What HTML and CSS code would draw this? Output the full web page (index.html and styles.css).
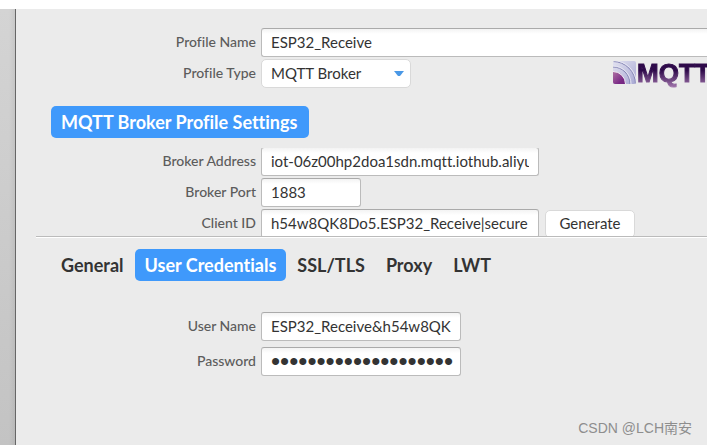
FILE: index.html
```html
<!DOCTYPE html>
<html lang="en">
<head>
	<meta charset="UTF-8">
	<title>MQTT Broker Profile</title>
	<link rel="stylesheet" href="styles.css">
</head>
<body>
	<div class="window">
		<div class="sidebar"></div>
		<main class="content">
			<div class="row">
				<label for="profile_name">Profile Name</label>
				<input class="field wide" id="profile_name" type="text" value="ESP32_Receive">
			</div>
			<div class="row">
				<label for="profile_type">Profile Type</label>
				<div class="select_box">
					<select id="profile_type">
						<option>MQTT Broker</option>
					</select>
					<svg class="arrow" width="10" height="6" viewBox="0 0 10 6"><path d="M0 0H10L6 5H4Z" fill="#4a98e6"/></svg>
				</div>
				<div class="logo">
					<svg width="23" height="23" viewBox="0 0 23 23">
						<defs>
							<linearGradient id="core" x1="0" y1="0" x2="1" y2="1">
								<stop offset="0.3" stop-color="#a8689f"/>
								<stop offset="0.6" stop-color="#7a2a86"/>
								<stop offset="1" stop-color="#651a75"/>
							</linearGradient>
							<linearGradient id="wave" x1="0" y1="0" x2="1" y2="1">
								<stop offset="0" stop-color="#e2e2f0"/>
								<stop offset="1" stop-color="#a9a9d4"/>
							</linearGradient>
							<clipPath id="tile"><rect width="23" height="23" rx="2"/></clipPath>
						</defs>
						<g clip-path="url(#tile)">
							<rect width="23" height="23" fill="url(#wave)"/>
							<g fill="none">
								<circle cx="0" cy="23" r="22.500" stroke="#8585b4"/>
								<circle cx="0" cy="23" r="23.500" stroke="#e6e6f2"/>
								<circle cx="0" cy="23" r="17" stroke="#8585b4"/>
								<circle cx="0" cy="23" r="18" stroke="#e6e6f2"/>
							</g>
							<circle cx="0" cy="23" r="12.500" fill="url(#core)" stroke="#f2f0f6"/>
						</g>
					</svg>
					<span class="logo_text">MQTT</span>
				</div>
			</div>

			<h2 class="title">MQTT Broker Profile Settings</h2>

			<div class="broker">
				<div class="row">
					<label for="address">Broker Address</label>
					<input class="field long" id="address" type="text" value="iot-06z00hp2doa1sdn.mqtt.iothub.aliyuncs.com">
				</div>
				<div class="row">
					<label for="port">Broker Port</label>
					<input class="field short" id="port" type="text" value="1883">
				</div>
				<div class="row">
					<label for="client">Client ID</label>
					<input class="field long" id="client" type="text" value="h54w8QK8Do5.ESP32_Receive|secure">
					<button class="generate" type="button">Generate</button>
				</div>
			</div>

			<nav class="tabs">
				<button type="button">General</button>
				<button type="button" class="active">User Credentials</button>
				<button type="button">SSL/TLS</button>
				<button type="button">Proxy</button>
				<button type="button">LWT</button>
			</nav>

			<div class="credentials">
				<div class="row">
					<label for="user">User Name</label>
					<input class="field medium" id="user" type="text" value="ESP32_Receive&amp;h54w8QK">
				</div>
				<div class="row">
					<label for="password">Password</label>
					<input class="field medium" id="password" type="password" value="12345678901234567890">
				</div>
			</div>

			<div class="watermark">CSDN @LCH南安</div>
		</main>
	</div>
</body>
</html>
```
FILE: styles.css
```css
* {
	box-sizing: border-box;
}

body {
	margin: 0;
	padding-top: 9px;
	background: #fff;
	font-family: Lato, "Noto Sans CJK SC", sans-serif;
	font-size: 15px;
	font-variant-ligatures: none;
	color: #333;
	overflow: hidden;
}

input, select, button {
	font: inherit;
	font-variant-ligatures: none;
	color: inherit;
}

.window {
	display: flex;
	min-height: calc(100vh - 9px);
}

.sidebar {
	flex: 0 0 16px;
	background: linear-gradient(to right, transparent 60%, rgba(0,0,0,0.06)), linear-gradient(#d4d4d4, #c3c3c3);
	border-right: 1px solid #666;
}

.content {
	position: relative;
	flex: 1;
	min-width: 0;
	padding-top: 19px;
	background: #ebebeb;
	overflow: hidden;
}

.row {
	display: flex;
	margin-bottom: 2px;
}

.row > label {
	flex: 0 0 240px;
	margin-right: 5px;
	line-height: 28px;
	text-align: right;
	font-size: 14px;
	font-weight: 500;
	color: #5c5c5c;
}

.field {
	height: 29px;
	padding: 0 9px 2px;
	border: 1px solid #bbb;
	border-top-color: #aaa;
	border-radius: 3px;
	background: linear-gradient(#f3f3f3, #fff 5px);
	outline: 0;
}

.field[type="password"] {
	padding: 0 7px 0 9px;
	font-family: "Liberation Sans", sans-serif;
	font-size: 26px;
}

.wide {
	flex: 1;
	min-width: 0;
	border-right: 0;
	border-radius: 3px 0 0 3px;
}

.long {
	width: 278px;
}

.medium {
	width: 200px;
}

.short {
	width: 100px;
}

.select_box {
	position: relative;
	width: 150px;
}

.select_box select {
	width: 100%;
	height: 29px;
	padding: 0 9px 2px;
	border: 1px solid #d9d9d9;
	border-radius: 5px;
	background: #fff;
	appearance: none;
}

.arrow {
	position: absolute;
	right: 7px;
	top: 12px;
}

/* runs up to the right side of the window */
.logo {
	display: flex;
	gap: 1px;
	width: 94px;
	height: 29px;
	margin-left: auto;
	padding-top: 2px;
}

.logo svg {
	flex: none;
}

.logo_text {
	flex: none;
	font: bold 26px/24px "Liberation Sans", sans-serif;
	color: transparent;
	background: linear-gradient(#2e0a4a 35%, #a679b0);
	background-clip: text;
	-webkit-background-clip: text;
	-webkit-text-stroke: 1px transparent;
}

.title {
	display: inline-block;
	margin: 16px 0 10px 35px;
	padding: 0 12px 0 10px;
	border-radius: 5px;
	background: #3f99fb;
	color: #fff;
	font-size: 18px;
	font-weight: bold;
	line-height: 32px;
	vertical-align: top;
}

/* scroll pane, cuts its first and last row */
.broker {
	height: 89px;
	margin-left: 20px;
	border-bottom: 1px solid #bbb;
	box-shadow: 0 1px #fff;
	overflow: hidden;
}

.broker .row:first-child {
	margin-top: -1px;
}

.broker .row > label {
	flex-basis: 220px;
}

.generate {
	width: 90px;
	height: 28px;
	margin: 1px 0 0 6px;
	padding: 0 0 2px;
	border: 1px solid #d9d9d9;
	border-radius: 5px;
	background: #fff;
}

.tabs {
	display: flex;
	gap: 1px;
	margin: 12px 0 31px 35px;
}

.tabs button {
	padding: 0 10px;
	border: 0;
	border-radius: 5px;
	background: none;
	font-size: 18px;
	font-weight: bold;
	line-height: 32px;
}

.tabs .active {
	background: #3f99fb;
	color: #fff;
}

.credentials .row {
	margin-bottom: 6px;
}

.watermark {
	position: absolute;
	right: 15px;
	bottom: 7px;
	font: 14px/20px "Liberation Sans", "Noto Sans CJK SC", sans-serif;
	color: #8e8e8e;
}
```
